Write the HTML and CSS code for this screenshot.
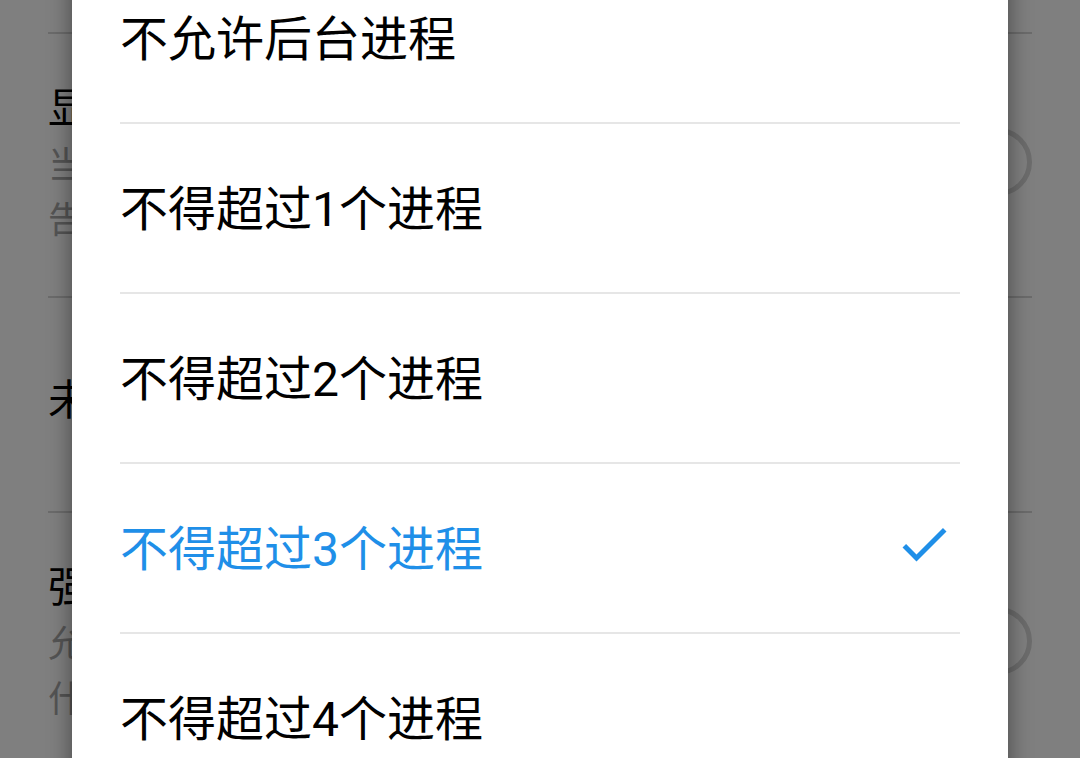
FILE: index.html
```html
<!DOCTYPE html>
<html lang="zh-CN">
<head>
<meta charset="utf-8">
<title>后台进程限制</title>
<link rel="stylesheet" href="styles.css">
</head>
<body>
<div class="page">
  <div class="settings">
    <div class="pref pref-cut"></div>
    <div class="pref">
      <div class="pref-text">
        <div class="pref-title">显示通知渠道警告</div>
        <div class="pref-summary">当应用未经有效渠道发布通知时，在屏幕上显示警</div>
        <div class="pref-summary">告</div>
      </div>
      <div class="toggle"></div>
    </div>
    <div class="pref pref-single">
      <div class="pref-text">
        <div class="pref-title">未启用的应用</div>
      </div>
    </div>
    <div class="pref">
      <div class="pref-text">
        <div class="pref-title">强制允许将应用写入外部存储设备</div>
        <div class="pref-summary">允许将任何应用写入外部存储设备，无论其清单值是</div>
        <div class="pref-summary">什么</div>
      </div>
      <div class="toggle"></div>
    </div>
  </div>
  <div class="scrim"></div>
  <div class="dialog">
    <div class="option">不允许后台进程</div>
    <div class="option">不得超过1个进程</div>
    <div class="option">不得超过2个进程</div>
    <div class="option selected">不得超过3个进程
      <svg class="check" viewBox="0 0 24 24" width="60" height="60"><path d="M9 16.17L4.83 12l-1.42 1.41L9 19 21 7l-1.41-1.41z" fill="currentColor"/></svg>
    </div>
    <div class="option">不得超过4个进程</div>
  </div>
</div>
</body>
</html>
```
FILE: styles.css
```css
html, body {
  margin: 0;
  padding: 0;
  width: 1080px;
  height: 758px;
  overflow: hidden;
  background: #ffffff;
  font-family: "Roboto", "Noto Sans CJK SC", sans-serif;
}
.page {
  position: relative;
  width: 1080px;
  height: 758px;
  overflow: hidden;
}
.settings {
  display: flex;
  flex-direction: column;
  padding: 0 48px;
}
.pref {
  display: flex;
  align-items: flex-start;
  padding-top: 51px;
  padding-bottom: 47px;
  border-bottom: 2px solid #d6d6d6;
}
.pref-cut {
  height: 34px;
  padding: 0;
  box-sizing: border-box;
}
.pref-single {
  padding-top: 79px;
  padding-bottom: 86px;
}
.pref-text {
  flex: 1;
  white-space: nowrap;
  overflow: hidden;
}
.pref-title {
  font-size: 42px;
  line-height: 48px;
  color: #000000;
}
.pref-summary {
  font-size: 36px;
  line-height: 55px;
  color: #a8a8a8;
}
.pref-title + .pref-summary {
  margin-top: 6px;
}
.toggle {
  width: 68px;
  height: 68px;
  margin-top: 43px;
  box-sizing: border-box;
  border: 5px solid #d8d8d8;
  border-radius: 50%;
  flex: none;
}
.scrim {
  position: absolute;
  inset: 0;
  background: rgba(0, 0, 0, 0.5);
}
.dialog {
  position: absolute;
  left: 72px;
  top: -46px;
  width: 936px;
  height: 900px;
  background: #ffffff;
  box-shadow: 0 0 22px rgba(0, 0, 0, 0.45);
  display: flex;
  flex-direction: column;
}
.option {
  height: 170px;
  box-sizing: border-box;
  padding-bottom: 6px;
  margin: 0 48px;
  border-bottom: 2px solid #e6e6e6;
  display: flex;
  align-items: center;
  justify-content: space-between;
  font-size: 48px;
  color: #000000;
  flex: none;
}
.option.selected {
  color: #1f8fe8;
}
.check {
  color: #1f8fe8;
  margin-right: 6px;
  margin-bottom: 2px;
}
```
